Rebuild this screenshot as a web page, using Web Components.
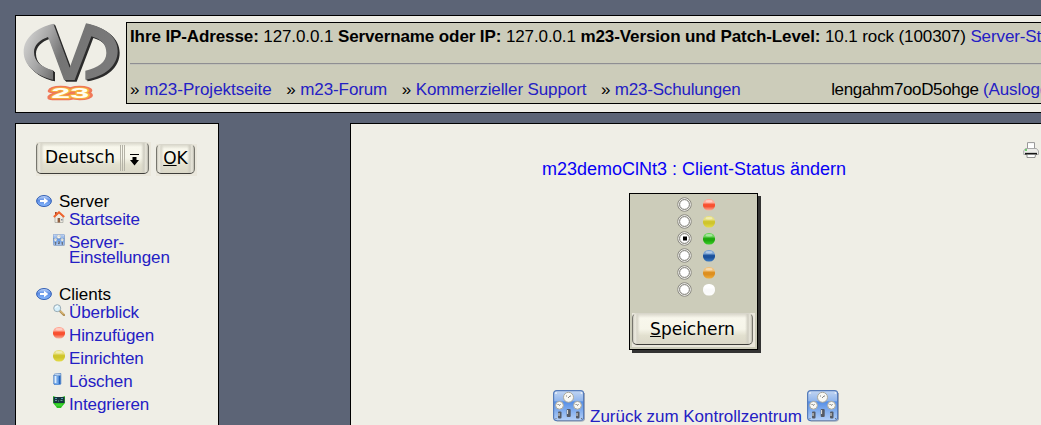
<!DOCTYPE html>
<html lang="de">
<head>
<meta charset="utf-8">
<title>m23</title>
<style>
html,body{margin:0;height:100%;overflow:hidden}
body{background:#5c6476;font:17px "Liberation Sans",Arial,sans-serif;color:#000}
</style>
</head>
<body>
<m-app></m-app>
<script>
const define=(name,html,setup)=>customElements.define(name,class extends HTMLElement{
  constructor(){
    super();
    const t=document.createElement('template');
    t.innerHTML=html;
    this.attachShadow({mode:'open'}).append(t.content.cloneNode(true));
  }
  connectedCallback(){ if(setup) setup(this,this.shadowRoot); }
});

define('m-link',`<style>:host{display:inline}a{color:#2420c4;text-decoration:none}</style><a><slot></slot></a>`);

define('m-logo',`<style>:host{display:block;width:110px;height:96px}svg{display:block}</style>
<svg width="110" height="96" viewBox="3 3 330 288">
<defs><linearGradient id="g" x1="0" y1="0" x2="1" y2=".25"><stop offset="0" stop-color="#dededc"/><stop offset=".3" stop-color="#a6a6a6"/><stop offset=".5" stop-color="#747474"/><stop offset="1" stop-color="#7a7a7a"/></linearGradient>
<filter id="b" x="-20%" y="-40%" width="140%" height="180%"><feGaussianBlur stdDeviation="2"/></filter>
<path id="s" d="M115 26 C66 37 26 67 26 111 C26 151 65 184 114 194 L114 166 C78 156 57 139 57 111 C57 91 74 74 99 66 L147 195 L179 195 L229 64 C258 72 274 88 274 114 C274 142 249 159 211 167 L211 194 C272 184 308 151 308 108 C308 66 270 36 213 25 L164 158 Z"/></defs>
<use href="#s" x="6" y="5" fill="#2c2c2c"/><use href="#s" x="3" y="2" fill="#2c2c2c"/><use href="#s" fill="url(#g)"/>
<g font-family="Liberation Sans,sans-serif" font-weight="bold" font-size="45">
<text x="109" y="248" textLength="114" lengthAdjust="spacingAndGlyphs" fill="#f07858" stroke="#f07858" stroke-width="13" stroke-linejoin="round" filter="url(#b)">23</text>
<text x="109" y="248" textLength="114" lengthAdjust="spacingAndGlyphs" fill="#fffef0" stroke="#f5b43c" stroke-width="5" paint-order="stroke" stroke-linejoin="round" aria-hidden="true">23</text></g></svg>`);

define('m-header',`<style>
:host{display:flex;box-sizing:border-box;width:1200px;height:98px;border:1px solid #000;background:#efeee6}
.info{box-sizing:border-box;width:1060px;height:82px;margin-top:6px;border:1px solid #000;background:#ccccba;padding:4px 3px 3px;line-height:20px;white-space:nowrap}
.ip{letter-spacing:-.105px}
hr{height:1px;border:0;margin:16px 0;background:#8e8e92;box-shadow:0 1px #c2c2b8}
nav{display:flex}
nav span{margin-right:14.6px}
nav span+span{letter-spacing:-.11px}
nav span:nth-of-type(4){letter-spacing:-.19px}
.user{margin-left:76px;letter-spacing:-.36px}
.user m-link{letter-spacing:-.1px}
</style><m-logo></m-logo><div class="info"><div class="ip"><b>Ihre IP-Adresse:</b> 127.0.0.1 <b>Servername oder IP:</b> 127.0.0.1 <b>m23-Version und Patch-Level:</b> 10.1 rock (100307) <m-link>Server-Status</m-link></div><hr>
<nav><span>» <m-link>m23-Projektseite</m-link></span><span>» <m-link>m23-Forum</m-link></span><span>» <m-link>Kommerzieller Support</m-link></span><span>» <m-link>m23-Schulungen</m-link></span><div class="user">lengahm7ooD5ohge <m-link>(Ausloggen)</m-link></div></nav></div>`);

define('m-button',`<style>
:host{display:block;box-sizing:border-box;background:#eae7dc;padding:0 2px 2px 0;font-family:"DejaVu Sans",sans-serif}
.b{box-sizing:border-box;display:flex;height:100%;align-items:center;justify-content:center;padding-bottom:var(--lift,0);border:1px solid #77766e;border-top-color:#d8d6cb;border-bottom:1.5px solid #3e3d39;border-radius:5px;background:linear-gradient(90deg,#c8c6bb 0,#eeece1 2px,#d8d6ca 4px,#f3f1e600 7px,#f3f1e600 calc(100% - 7px),#cfcdc1 calc(100% - 4px),#eae8dd calc(100% - 2px),#b8b6ab 100%),linear-gradient(#dbd9cd 0,#f8f7ec 4px,#f6f5e9 50%,#e2e0cf 72%,#dbd8c8)}
</style><div class="b"><slot></slot></div>`);

define('m-select',`<style>:host{display:block}m-button{height:100%}
.t{width:76px;margin:-2px 0 0 1px}.g{width:3px;height:26px;border:solid #b4b2a6;border-width:0 1px;background:linear-gradient(90deg,transparent 1px,#b4b2a6 1px,#b4b2a6 2px,transparent 2px);margin:0 5px 0 -1px}
svg{display:block;margin:3px 2px 0 0}</style><m-button><span class="t"><slot></slot></span><i class="g"></i><svg width="9" height="12"><path d="M2.500 3h4v3H9L4.500 11.500 0 6h2.500z"/><rect width="9" height="1"/></svg></m-button>`);

const colors={red:['#f85030','#ffaa98','#f6b4a0'],yellow:['#cfc52c','#e6df7e','#e4dc4a'],green:['#1fa80e','#6cd45c','#3bd128'],blue:['#1c529c','#7ba4d4','#3c7cc4'],orange:['#dd8f20','#f0c078','#efae3e'],white:['#fafafa','#fff','#fdfdfd']};
define('m-orb',`<style>:host{display:block;width:12px;height:12px}svg{display:block;width:12px;height:12px}</style><div></div>`,(el,r)=>{
  const [a,b,c]=colors[el.getAttribute('color')];
  r.querySelector('div').innerHTML=`<svg viewBox="0 0 12 12"><defs><linearGradient id="o" x1="0" y1="0" x2="0" y2="1"><stop offset="0" stop-color="${b}"/><stop offset=".3" stop-color="${b}"/><stop offset=".48" stop-color="${a}"/><stop offset=".65" stop-color="${a}"/><stop offset="1" stop-color="${c}"/></linearGradient></defs><rect width="12" height="11.600" rx="5.300" fill="url(#o)"/><ellipse cx="6" cy="2.200" rx="3.500" ry="1.200" fill="#fff" opacity=".4"/></svg>`;
});

const gauges=`<svg viewBox="0 0 32 32"><defs><linearGradient id="p" x1="0" y1="0" x2="0" y2="1"><stop offset="0" stop-color="#c3d6f2"/><stop offset=".35" stop-color="#90b5ec"/><stop offset=".37" stop-color="#568fe6"/><stop offset="1" stop-color="#b4d0f7"/></linearGradient></defs><rect x=".6" y=".6" width="30" height="30" rx="3" fill="url(#p)" stroke="#567cba" stroke-width="1.2"/><path d="M31.5 3v26q0 2-2 2H4" fill="none" stroke="#9ca4b4"/><g fill="#f8f8f4" stroke="#aaa89c"><circle cx="15.5" cy="7.3" r="5"/><circle cx="6.5" cy="15.3" r="3.9"/><circle cx="24.5" cy="15.3" r="3.9"/></g><path d="M13 6h1m3 0h1M15 8l2-2M4.500 14.500h1l1 1 1-1.500M22.500 14.500h1l1 1 1-1.500" stroke="#777" stroke-width=".9" fill="none"/><g fill="#555a64"><rect x="13.700" y="19" width="4" height="8" rx="1"/><rect x="5" y="21.500" width="3.500" height="7" rx="1"/><rect x="23" y="21.500" width="3.500" height="7" rx="1"/></g><path d="M14.600 20v4M6 23v3M24 23v3" stroke="#e7e7e2"/><g fill="#e8eef8"><circle cx="3" cy="3" r="1"/><circle cx="28.500" cy="3" r="1"/></g><path d="M2.500 28l1 1M28 28l1 1" stroke="#777"/></svg>`;
const icons={gauges,
arrow:`<svg viewBox="0 0 16 12"><defs><linearGradient id="p" x1="0" y1="0" x2="0" y2="1"><stop offset="0" stop-color="#c8dcfc"/><stop offset=".45" stop-color="#5c8ce4"/><stop offset="1" stop-color="#8cbcff"/></linearGradient></defs><ellipse cx="8" cy="6" rx="7.400" ry="5.500" fill="url(#p)" stroke="#3460b4"/><path d="M4 5h4V2.800L12.300 6 8 9.200V7H4z" fill="#fff"/></svg>`,
home:`<svg viewBox="0 0 12 12"><path d="M2 6l4-4 4 4v5.500H2z" fill="#eeece3" stroke="#a4a49d" stroke-width=".7"/><path d="M2 1h1.800v3H2z" fill="#aa4426"/><path d="M.8 6L6 1.300 11.200 6" fill="none" stroke="#f0632c" stroke-width="2"/><path d="M4.600 7h2.500v4.500H4.600z" fill="#916040"/><path d="M8 8h1.500v1.500H8z" fill="#858b97"/></svg>`,
search:`<svg viewBox="0 0 12 12"><path d="M7 7l4 4" stroke="#b28e50" stroke-width="2.400" stroke-linecap="round"/><path d="M7.500 7l3.300 3.300" stroke="#f2d28e"/><circle cx="4.200" cy="4.200" r="3.500" fill="#d5effa" stroke="#99abb4"/><path d="M2.500 4q.5-2 2.500-2" fill="none" stroke="#fff"/></svg>`,
bin:`<svg viewBox="0 0 12 12"><path d="M.8 2l7-1.500V11l-1.500 1H2L.8 11z" fill="#73a9ea" stroke="#477ac0" stroke-width=".8"/><path d="M2.500 3v7" stroke="#e0effd" stroke-width="1.800"/><path d="M6.500 3v8" stroke="#2865bd" stroke-width="1.600"/><ellipse cx="4.500" cy="1.600" rx="3.500" ry="1.100" fill="#bdd7f5" stroke="#6487b5" stroke-width=".5"/></svg>`,
robot:`<svg viewBox="0 0 12 12"><path d="M0 0l3 1h6l3-1v7L9 10.500 8 12H4L3 10.500 0 7z" fill="#2bc522"/><path d="M.5 1h11v6H.5z" fill="#173440"/><path d="M2 2l1 1 1-1M8 2l1 1 1-1" stroke="#4fa3b0" fill="none"/><path d="M2 4.500h2M5 5h1M7.500 4.500h2" stroke="#6f9a98"/><path d="M3 9h6" stroke="#54e43e"/></svg>`,
printer:`<svg viewBox="0 0 16 16"><path d="M4.500 6V.6h7V6" fill="#fff" stroke="#999"/><path d="M2.500 6.500h11l2 2.500v3.500H.7V9z" fill="#ecece9" stroke="#aaa"/><path d="M2 11.700h12" stroke="#161616" stroke-width="1.700"/><path d="M4 12.500h8.500l-.5 3H4z" fill="#fff" stroke="#777" stroke-width=".8"/><path d="M2 8h2" stroke="#48c848" stroke-width="1.500"/></svg>`};
define('m-icon',`<style>:host{display:block;width:12px;height:12px;flex:none}div,svg{display:block;width:100%;height:100%}</style><div></div>`,(el,r)=>{r.querySelector('div').innerHTML=icons[el.getAttribute('name')];});

define('m-item',`<style>:host{display:flex;gap:4px;line-height:15px;letter-spacing:-.1px}div{margin-top:-1px;width:12px}</style><div><slot name="icon"></slot></div><m-link><slot></slot></m-link>`);

define('m-section',`<style>:host{display:block}
h2{display:flex;gap:7px;margin:0;font:inherit;line-height:15px}m-icon{width:16px;margin-top:1px}
.items{display:flex;flex-direction:column;gap:8px;margin:3px 0 0 17px}</style>
<h2><m-icon name="arrow"></m-icon><slot name="title"></slot></h2><div class="items"><slot></slot></div>`);

define('m-sidebar',`<style>
:host{display:block;box-sizing:border-box;width:204px;height:400px;background:#efeee6;border:1px solid #000;padding:18px 20px}
.lang{display:flex;gap:5px;align-items:flex-end;height:34px}
m-select{width:115px;height:34px}
m-button{width:41px;height:32px;--lift:2px}
m-section{margin-top:22px}m-section:first-of-type{margin-top:18px}
</style>
<div class="lang"><m-select>Deutsch</m-select><m-button><span><u>O</u>K</span></m-button></div>
<m-section><span slot="title">Server</span>
<m-item><m-icon slot="icon" name="home"></m-icon>Startseite</m-item>
<m-item><m-icon slot="icon" name="gauges"></m-icon>Server-<br>Einstellungen</m-item></m-section>
<m-section><span slot="title">Clients</span>
<m-item><m-icon slot="icon" name="search"></m-icon>Überblick</m-item>
<m-item><m-orb slot="icon" color="red"></m-orb>Hinzufügen</m-item>
<m-item><m-orb slot="icon" color="yellow"></m-orb>Einrichten</m-item>
<m-item><m-icon slot="icon" name="bin"></m-icon>Löschen</m-item>
<m-item><m-icon slot="icon" name="robot"></m-icon>Integrieren</m-item></m-section>`);

define('m-radio',`<style>:host{display:block;width:15px;height:15px}svg{display:block}.d{display:none}:host([checked]) .d{display:block}</style>
<svg width="15" height="15"><circle cx="7.500" cy="7.500" r="6.700" fill="#fff" stroke="#807f78"/><circle cx="7.500" cy="7.500" r="5.600" fill="none" stroke="#e4e3da" stroke-width="1"/><circle cx="7.500" cy="7.500" r="4.900" fill="#fff" stroke="#77766f"/><path class="d" d="M6 5.500h4v4H6z"/></svg>`);

define('m-status',`<style>
:host{display:block;box-sizing:border-box;width:129px;height:157px;border:1px solid #000;background:#ccccba;box-shadow:3px 3px #333;padding:2px}
.row{display:flex;gap:11px;height:17px;padding-left:45px}
m-orb{margin-top:3px}m-button{width:123px;height:34px;margin-top:15px}
m-radio{margin-top:1px}
</style><div class="rows"></div><m-button><span><u>S</u>peichern</span></m-button>`,(el,r)=>{
  r.querySelector('.rows').innerHTML=Object.keys(colors).map(c=>`<div class="row"><m-radio ${c==='green'?'checked':''}></m-radio><m-orb color="${c}"></m-orb></div>`).join('');
});

define('m-main',`<style>
:host{display:flex;box-sizing:border-box;width:850px;height:400px;border:1px solid #000;background:#efeee6}
.c{width:688px;display:flex;flex-direction:column;align-items:center;padding-top:18px}
.p{align-self:flex-end;height:16px}.p m-icon{width:16px;height:16px}
h1{margin:1px 2px 0 0;font:18px/20px "Liberation Sans",sans-serif;color:#0800f4}
m-status{margin:14px 3px 0 0}
.back{display:flex;gap:5px;margin:40px 0 0 2px}.back m-icon{width:32px;height:32px}.back m-link{line-height:20px;align-self:flex-end;margin-bottom:-5px;letter-spacing:-.03px}
</style><div class="c"><div class="p"><m-icon name="printer"></m-icon></div><h1>m23demoClNt3 : Client-Status ändern</h1><m-status></m-status>
<div class="back"><m-icon name="gauges"></m-icon><m-link>Zurück zum Kontrollzentrum</m-link><m-icon name="gauges"></m-icon></div></div>`);

define('m-app',`<style>:host{display:block;width:1041px;height:425px;box-sizing:border-box;padding:15px 0 0 15px;overflow:hidden}
.cols{display:flex;gap:131px;margin-top:10px;align-items:flex-start}m-sidebar,m-main{flex:none}</style>
<m-header></m-header><div class="cols"><m-sidebar></m-sidebar><m-main></m-main></div>`);
</script>
</body>
</html>
